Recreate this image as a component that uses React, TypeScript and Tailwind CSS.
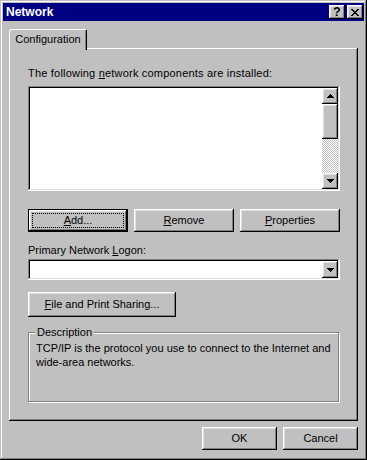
import type { ReactNode } from "react";

const raised =
  "shadow-[inset_-1px_-1px_#000,inset_1px_1px_#fff,inset_-2px_-2px_#808080,inset_2px_2px_#dfdfdf]";
const sunken =
  "shadow-[inset_-1px_-1px_#fff,inset_1px_1px_#808080,inset_-2px_-2px_#dfdfdf,inset_2px_2px_#000]";

function Btn({ children, className = "" }: { children: ReactNode; className?: string }) {
  return (
    <button className={`shrink-0 flex items-center justify-center bg-[#c0c0c0] leading-[13px] ${raised} ${className}`}>
      {children}
    </button>
  );
}

function Arrow({ down = false }: { down?: boolean }) {
  const rows = down ? [0, 1, 2, 3] : [3, 2, 1, 0];
  return (
    <svg width="7" height="4" viewBox="0 0 7 4" shapeRendering="crispEdges">
      {rows.map((r, i) => (
        <rect key={i} x={r} y={i} width={7 - r * 2} height={1} fill="#000" />
      ))}
    </svg>
  );
}

function CloseGlyph() {
  const px = [
    [0, 0], [1, 0], [6, 0], [7, 0],
    [1, 1], [2, 1], [5, 1], [6, 1],
    [2, 2], [3, 2], [4, 2], [5, 2],
    [3, 3], [4, 3],
    [2, 4], [3, 4], [4, 4], [5, 4],
    [1, 5], [2, 5], [5, 5], [6, 5],
    [0, 6], [1, 6], [6, 6], [7, 6],
  ];
  return (
    <svg width="8" height="7" viewBox="0 0 8 7" shapeRendering="crispEdges">
      {px.map(([x, y]) => (
        <rect key={`${x}-${y}`} x={x} y={y} width={1} height={1} fill="#000" />
      ))}
    </svg>
  );
}

function Dither() {
  return (
    <svg width="16" height="36" className="block" shapeRendering="crispEdges">
      <defs>
        <pattern id="dith" width="2" height="2" patternUnits="userSpaceOnUse">
          <rect width="2" height="2" fill="#c0c0c0" />
          <rect width="1" height="1" fill="#fff" />
          <rect x="1" y="1" width="1" height="1" fill="#fff" />
        </pattern>
      </defs>
      <rect width="16" height="36" fill="url(#dith)" />
    </svg>
  );
}

export default function App() {
  return (
    <div
      className={`w-[367px] h-[460px] bg-[#c0c0c0] p-[3px] flex flex-col text-[11px] text-black font-['Liberation_Sans',Arial,sans-serif] shadow-[inset_-1px_-1px_#000,inset_1px_1px_#c0c0c0,inset_-2px_-2px_#808080,inset_2px_2px_#fff]`}
    >
      {/* title bar */}
      <div className="h-[18px] bg-[#000080] flex items-center pl-[3px] pr-[1px]">
        <span className="flex-1 text-white font-bold text-[12px] leading-[14px]">Network</span>
        <Btn className="w-[16px] h-[14px] font-bold text-[12px]">?</Btn>
        <Btn className="w-[16px] h-[14px] ml-[2px]">
          <CloseGlyph />
        </Btn>
      </div>

      <div className="flex-1 flex flex-col px-[6px] pt-[8px]">
        {/* tab */}
        <div className="relative z-10 -mb-[2px] w-[78px] h-[21px] bg-[#c0c0c0] border-l border-t border-r border-white border-r-black rounded-tl-[3px] rounded-tr-[2px] shadow-[inset_-1px_0_#808080] flex justify-center pt-[3px] leading-[13px]">
          Configuration
        </div>

        {/* panel */}
        <div className="h-[373px] bg-[#c0c0c0] pl-[19px] pr-[18px] pt-[19px] flex flex-col shadow-[inset_-1px_-1px_#000,inset_1px_1px_#fff,inset_-2px_-2px_#808080]">
          <div className="leading-[13px] tracking-[0.2px]">
            The following <u>n</u>etwork components are installed:
          </div>

          <div className={`mt-[6px] h-[105px] bg-white p-[2px] flex ${sunken}`}>
            <div className="flex-1" />
            <div className="w-[16px] flex flex-col overflow-hidden">
              <Btn className="h-[16px] w-[16px]">
                <Arrow />
              </Btn>
              <Btn className="h-[35px] w-[16px]">{null}</Btn>
              <div className="flex-1 min-h-0 overflow-hidden">
                <Dither />
              </div>
              <Btn className="h-[16px] w-[16px]">
                <Arrow down />
              </Btn>
            </div>
          </div>

          <div className="mt-[18px] flex gap-[6px]">
            <button className="w-[100px] h-[23px] border border-black bg-[#c0c0c0] flex">
              <span className={`flex-1 p-[3px] flex ${raised}`}>
                <span className="flex-1 border border-dotted border-black flex items-center justify-center leading-[13px]">
                  <span>
                    <u>A</u>dd...
                  </span>
                </span>
              </span>
            </button>
            <Btn className="w-[100px] h-[23px]">
              <span>
                <u>R</u>emove
              </span>
            </Btn>
            <Btn className="w-[100px] h-[23px]">
              <span>
                <u>P</u>roperties
              </span>
            </Btn>
          </div>

          <div className="mt-[12px] leading-[13px]">
            Primary Network <u>L</u>ogon:
          </div>
          <div className={`mt-[2px] h-[21px] bg-white p-[2px] flex ${sunken}`}>
            <div className="flex-1" />
            <Btn className="w-[16px] h-[17px]">
              <Arrow down />
            </Btn>
          </div>

          <Btn className="mt-[12px] w-[148px] h-[25px]">
            <span>
              <u>F</u>ile and Print Sharing...
            </span>
          </Btn>

          <fieldset className="mt-[9px] w-[311px] h-[76px] border border-[#808080] px-[7px] shadow-[inset_1px_1px_#fff,1px_1px_#fff]">
            <legend className="-ml-[1px] px-[2px] leading-[13px] bg-[#c0c0c0]">Description</legend>
            <p className="mt-[2px] leading-[14px] whitespace-nowrap">
              TCP/IP is the protocol you use to connect to the Internet and
              <br />
              wide-area networks.
            </p>
          </fieldset>
        </div>

        {/* bottom buttons */}
        <div className="mt-[6px] flex justify-end gap-[6px]">
          <Btn className="w-[75px] h-[23px]">OK</Btn>
          <Btn className="w-[75px] h-[23px]">Cancel</Btn>
        </div>
      </div>
    </div>
  );
}
